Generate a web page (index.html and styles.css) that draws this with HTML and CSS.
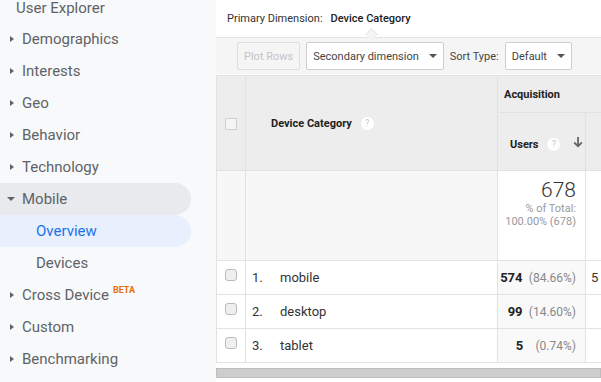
FILE: index.html
```html
<!DOCTYPE html>
<html lang="en">
<head>
    <meta charset="UTF-8">
    <title>Mobile Overview</title>
    <link rel="stylesheet" href="styles.css">
</head>
<body>
    <div class="sidebar">
        <ul class="nav">
            <li class="nav-item plain">User Explorer</li>
            <li class="nav-item"><span class="caret"></span>Demographics</li>
            <li class="nav-item"><span class="caret"></span>Interests</li>
            <li class="nav-item"><span class="caret"></span>Geo</li>
            <li class="nav-item"><span class="caret"></span>Behavior</li>
            <li class="nav-item"><span class="caret"></span>Technology</li>
            <li class="nav-item open"><span class="caret down"></span>Mobile</li>
            <li class="nav-item sub active">Overview</li>
            <li class="nav-item sub">Devices</li>
            <li class="nav-item"><span class="caret"></span>Cross Device<sup class="beta">BETA</sup></li>
            <li class="nav-item"><span class="caret"></span>Custom</li>
            <li class="nav-item"><span class="caret"></span>Benchmarking</li>
        </ul>
    </div>

    <div class="main">
        <div class="primary">
            <span class="label">Primary Dimension:</span>
            <span class="current">Device Category</span>
        </div>
        <div class="toolbar">
            <button class="btn" disabled>Plot Rows</button>
            <button class="btn select">Secondary dimension <span class="tri"></span></button>
            <span class="sort-label">Sort Type:</span>
            <button class="btn select">Default <span class="tri"></span></button>
        </div>

        <table class="report">
            <colgroup>
                <col class="c-check">
                <col class="c-dim">
                <col class="c-users">
                <col class="c-next">
            </colgroup>
            <thead>
                <tr class="h1">
                    <th rowspan="2" class="check-cell"><span class="box"></span></th>
                    <th rowspan="2" class="dim-head">Device Category <span class="help">?</span></th>
                    <th colspan="2" class="group">Acquisition</th>
                </tr>
                <tr class="h2">
                    <th class="metric">Users <span class="help">?</span>
                        <svg class="sort-arrow" width="10" height="12" viewBox="0 0 10 12"><path d="M5 1v9M1.2 6.5L5 10.3l3.8-3.8" fill="none" stroke="#666" stroke-width="1.8"/></svg>
                    </th>
                    <th class="metric"></th>
                </tr>
            </thead>
            <tbody>
                <tr class="totals">
                    <td class="check-cell"></td>
                    <td></td>
                    <td class="total">
                        <div class="big">678</div>
                        <div class="small">% of Total:<br>100.00% (678)</div>
                    </td>
                    <td class="blank"></td>
                </tr>
                <tr class="row">
                    <td class="check-cell"><span class="rbox"></span></td>
                    <td><span class="idx">1.</span>mobile</td>
                    <td class="num"><b>574</b> <span class="pct">(84.66%)</span></td>
                    <td class="next">5</td>
                </tr>
                <tr class="row">
                    <td class="check-cell"><span class="rbox"></span></td>
                    <td><span class="idx">2.</span>desktop</td>
                    <td class="num"><b>99</b> <span class="pct">(14.60%)</span></td>
                    <td class="next"></td>
                </tr>
                <tr class="row">
                    <td class="check-cell"><span class="rbox"></span></td>
                    <td><span class="idx">3.</span>tablet</td>
                    <td class="num"><b>5</b> <span class="pct wide">(0.74%)</span></td>
                    <td class="next"></td>
                </tr>
            </tbody>
        </table>

        <div class="hscroll"></div>
    </div>
</body>
</html>
```

FILE: styles.css
```css
body {
    margin: 0;
    width: 601px;
    height: 382px;
    overflow: hidden;
    display: flex;
    font-family: Roboto, Arial, sans-serif;
    background: #fff;
}
.sidebar {
    width: 216px;
    flex-shrink: 0;
    background: #f8f9fa;
    overflow: hidden;
}
.nav {
    list-style: none;
    margin: -8px 0 0 0;
    padding: 0;
}
.nav-item {
    height: 32px;
    line-height: 32px;
    font-size: 15px;
    color: #5f6368;
    padding-left: 10px;
    width: 181px;
    display: flex;
    align-items: center;
}
.nav-item.plain {
    padding-left: 16px;
    height: 31px;
}
.nav-item.sub {
    padding-left: 36px;
    width: 155px;
}
.nav-item.open {
    background: #e8eaed;
    border-radius: 0 16px 16px 0;
}
.nav-item.active {
    background: #e8f0fe;
    color: #1a73e8;
    border-radius: 0 16px 16px 0;
}
.caret {
    width: 0;
    height: 0;
    border-top: 3.5px solid transparent;
    border-bottom: 3.5px solid transparent;
    border-left: 4px solid #5f6368;
    margin-right: 8px;
}
.caret.down {
    border-left: 4px solid transparent;
    border-right: 4px solid transparent;
    border-top: 4px solid #5f6368;
    border-bottom: 0;
    margin-left: -3px;
    margin-right: 7px;
}
.beta {
    font-size: 9px;
    font-weight: bold;
    color: #e8710a;
    margin-left: 4px;
    line-height: 1;
    align-self: flex-start;
    margin-top: 7px;
}

.main {
    flex: 1;
    overflow: hidden;
}
.primary {
    height: 37px;
    display: flex;
    align-items: center;
    padding-left: 11px;
    font-size: 11px;
    color: #333;
    border-bottom: 1px solid #e5e5e5;
}
.primary .current {
    font-weight: 500;
    color: #222;
    margin-left: 8px;
    position: relative;
}
.primary .current::after {
    content: "";
    position: absolute;
    left: 36px;
    bottom: -14px;
    width: 8px;
    height: 8px;
    background: #f5f5f5;
    border-left: 1px solid #e5e5e5;
    border-top: 1px solid #e5e5e5;
    transform: rotate(45deg);
}
.toolbar {
    background: #f5f5f5;
    height: 36px;
    display: flex;
    align-items: center;
    padding-left: 21px;
    gap: 6px;
    white-space: nowrap;
}
.btn {
    flex-shrink: 0;
    height: 28px;
    padding: 0 6px;
    font-family: Roboto, Arial, sans-serif;
    font-size: 11px;
    color: #444;
    background: #fff;
    border: 1px solid #cfcfcf;
    border-radius: 2px;
    display: flex;
    align-items: center;
    white-space: nowrap;
}
.btn:disabled {
    color: #c4c4c4;
    background: #f5f5f5;
    border-color: #dedede;
}
.select .tri {
    width: 0;
    height: 0;
    border-left: 4px solid transparent;
    border-right: 4px solid transparent;
    border-top: 4px solid #555;
    margin-left: 10px;
}
.sort-label {
    font-size: 11px;
    color: #444;
    flex-shrink: 0;
}

.report {
    border-collapse: collapse;
    table-layout: fixed;
    width: 400px;
    margin-top: 1px;
    font-size: 11px;
    color: #222;
}
.c-check { width: 29px; }
.c-dim { width: 252px; }
.c-users { width: 88px; }
.c-next { width: 31px; }
.report th,
.report td {
    border: 1px solid #e2e2e2;
    padding: 0;
}
.report thead th {
    background: #ededed;
    font-weight: bold;
    text-align: left;
}
.h1 { height: 37px; }
.h2 { height: 58px; }
.report .check-cell {
    text-align: center;
}
.box {
    display: inline-block;
    width: 10px;
    height: 10px;
    border: 1px solid #cfcfcf;
    background: #f5f5f5;
    vertical-align: middle;
}
.report .dim-head {
    padding-left: 25px;
}
.report .group {
    padding-left: 6px;
}
.report .metric {
    padding-left: 12px;
    padding-top: 4px;
}
.help {
    display: inline-block;
    width: 13px;
    height: 13px;
    line-height: 13px;
    border-radius: 50%;
    background: #fff;
    color: #c6c6c6;
    font-size: 9px;
    font-weight: normal;
    text-align: center;
    margin-left: 6px;
    vertical-align: 1px;
}
.sort-arrow {
    margin-left: 10px;
}
.totals {
    height: 90px;
}
.totals td {
    background: #f7f7f7;
    vertical-align: top;
}
.totals td.total {
    background: #fff;
    text-align: right;
    padding: 7px 9px 0 0;
}
.totals td.blank {
    background: #fff;
}
.big {
    font-size: 21px;
    font-weight: 300;
    color: #333;
    line-height: 24px;
}
.small {
    font-size: 11px;
    color: #999;
    line-height: 13px;
}
.row {
    height: 34px;
}
.row td {
    font-size: 13px;
    color: #333;
}
.idx {
    display: inline-block;
    width: 28px;
    padding-left: 6px;
}
.rbox {
    display: inline-block;
    width: 10px;
    height: 10px;
    border: 1px solid #bbb;
    border-radius: 3px;
    background: #efefef;
    vertical-align: 2px;
}
.row td.num {
    background: #f9f9f9;
    text-align: right;
    padding-right: 9px;
    font-size: 13px;
}
.num b {
    color: #222;
}
.pct {
    font-size: 12px;
    color: #888;
    margin-left: 3px;
}
.pct.wide {
    margin-left: 9px;
}
.row td.next {
    padding-left: 5px;
}
.hscroll {
    height: 8px;
    margin-top: 5px;
    background: #cdcdcd;
    border: 1px solid #bdbdbd;
}
```
